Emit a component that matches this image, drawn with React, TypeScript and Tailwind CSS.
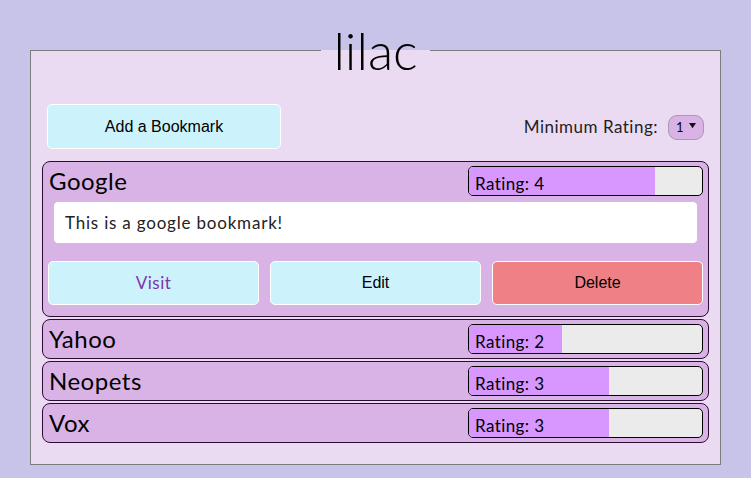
import { useState } from 'react';

type Bookmark = {
  id: number;
  title: string;
  rating: number;
  description: string;
  url: string;
};

const BOOKMARKS: Bookmark[] = [
  { id: 1, title: 'Google', rating: 4, description: 'This is a google bookmark!', url: '#' },
  { id: 2, title: 'Yahoo', rating: 2, description: 'This is a yahoo bookmark!', url: '#' },
  { id: 3, title: 'Neopets', rating: 3, description: 'This is a neopets bookmark!', url: '#' },
  { id: 4, title: 'Vox', rating: 3, description: 'This is a vox bookmark!', url: '#' },
];

const round = "font-['Lato',sans-serif]";
const arial = "font-['Liberation_Sans',Arial,sans-serif]";

function RatingBar({ rating }: { rating: number }) {
  return (
    <div className="h-[30px] w-[235px] shrink-0 overflow-hidden rounded-[5px] border border-black bg-[#ebebeb]">
      {/* fill width comes from the rating, out of 5 */}
      <div
        className="flex h-full items-end whitespace-nowrap bg-[#d896ff] pb-[3px] pl-[6px] text-[17px] leading-none tracking-[0.4px] text-black"
        style={{ width: `${(rating / 5) * 100}%` }}
      >
        Rating: {rating}
      </div>
    </div>
  );
}

function BookmarkCard({
  bookmark,
  expanded,
  onToggle,
}: {
  bookmark: Bookmark;
  expanded: boolean;
  onToggle: () => void;
}) {
  return (
    <div className="rounded-[8px] border border-[#2b0d31] bg-[#d9b3e6]">
      <div
        onClick={onToggle}
        className="flex h-[38px] cursor-pointer items-center justify-between pl-[6px] pr-[5px]"
      >
        <h2 className="text-[24px] leading-none tracking-[0.5px] text-black">{bookmark.title}</h2>
        <RatingBar rating={bookmark.rating} />
      </div>

      {expanded && (
        <div className="px-[5px] pb-[11px] pt-[1px]">
          <div className="mx-[5px] flex h-[43px] items-center rounded-[5px] border border-[#c9c3cc] bg-white px-[11px] text-[17px] tracking-[0.8px] text-[#222]">
            {bookmark.description}
          </div>
          <div className="mt-[17px] grid grid-cols-3 gap-[11px]">
            <a
              href={bookmark.url}
              className="flex h-[44px] items-center justify-center rounded-[5px] border border-white bg-[#ccf3fb] text-[17px] tracking-[0.5px] text-[#8033ac]"
            >
              Visit
            </a>
            <button
              className={`h-[44px] rounded-[5px] border border-white bg-[#ccf3fb] text-[16px] text-black ${arial}`}
            >
              Edit
            </button>
            <button
              className={`h-[44px] rounded-[5px] border border-white bg-[#ef8085] text-[16px] text-black ${arial}`}
            >
              Delete
            </button>
          </div>
        </div>
      )}
    </div>
  );
}

export default function App() {
  const [expanded, setExpanded] = useState<number | null>(1);
  const [minRating, setMinRating] = useState('1');

  const visible = BOOKMARKS.filter((b) => b.rating >= Number(minRating));

  return (
    <div className={`min-h-screen bg-[#c8c3e9] pt-[26px] pb-[14px] ${round}`}>
      <fieldset className="mx-[30px] border border-[#7c7c7c] bg-[#ebdbf2] px-[11px] pb-[21px]">
        <legend className="mx-auto px-[12px] text-[52px] font-light leading-[48px] text-black">
          lilac
        </legend>

        <div className="mt-[30px] flex items-center justify-between px-[5px]">
          <button
            className={`h-[45px] w-[234px] rounded-[5px] border border-white bg-[#ccf3fb] text-[16px] text-black ${arial}`}
          >
            Add a Bookmark
          </button>
          <label className="flex items-center gap-[10px] text-[17px] tracking-[0.5px] text-[#222]">
            Minimum Rating:
            <span className="relative">
              <select
                value={minRating}
                onChange={(e) => setMinRating(e.target.value)}
                className="h-[25px] w-[36px] appearance-none rounded-[9px] border border-[#a59cac] bg-[#d9b3e6] pl-[7px] text-[13px] tracking-normal text-black"
              >
                {['1', '2', '3', '4', '5'].map((n) => (
                  <option key={n} value={n}>
                    {n}
                  </option>
                ))}
              </select>
              <svg
                viewBox="0 0 8 8"
                className="pointer-events-none absolute right-[8px] top-[9px] h-[7px] w-[7px]"
              >
                <path d="M0 1h8L4 7z" fill="#111" />
              </svg>
            </span>
          </label>
        </div>

        <div className="mt-[12px] flex flex-col gap-[2px]">
          {visible.map((b) => (
            <BookmarkCard
              key={b.id}
              bookmark={b}
              expanded={expanded === b.id}
              onToggle={() => setExpanded(expanded === b.id ? null : b.id)}
            />
          ))}
        </div>
      </fieldset>
    </div>
  );
}
